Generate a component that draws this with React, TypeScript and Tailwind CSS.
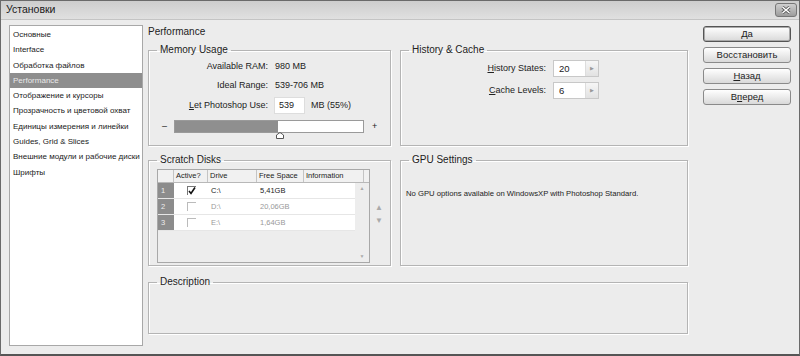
import type { ReactNode } from 'react';

const sections = [
  'Основные',
  'Interface',
  'Обработка файлов',
  'Performance',
  'Отображение и курсоры',
  'Прозрачность и цветовой охват',
  'Единицы измерения и линейки',
  'Guides, Grid & Slices',
  'Внешние модули и рабочие диски',
  'Шрифты',
];

const disks = [
  { n: 1, active: true, drive: 'C:\\', free: '5,41GB' },
  { n: 2, active: false, drive: 'D:\\', free: '20,06GB' },
  { n: 3, active: false, drive: 'E:\\', free: '1,64GB' },
];

function Group({ title, className, children }: { title: string; className: string; children?: ReactNode }) {
  return (
    <fieldset className={`min-w-0 border border-[#b4b4b4] shadow-[inset_1px_1px_0_#fff,1px_1px_0_#fff] ${className}`}>
      <legend className="ml-[8px] px-[3px] text-[10px] leading-[12px] text-[#222]">{title}</legend>
      {children}
    </fieldset>
  );
}

function DialogButton({ label, isDefault }: { label: ReactNode; isDefault?: boolean }) {
  return (
    <button
      className={`h-[16px] w-[88px] rounded-[3px] border bg-gradient-to-b from-white to-[#d9d9d9] text-[9.5px] leading-none text-[#222] ${
        isDefault ? 'border-[#555] shadow-[inset_0_0_0_1px_#aaa]' : 'border-[#8a8a8a]'
      }`}
    >
      {label}
    </button>
  );
}

function Spin({ value }: { value: string }) {
  return (
    <div className="flex h-[17px] w-[46px] border border-[#c8c8c8] bg-white">
      <span className="flex-1 pl-[5px] text-[9.5px] leading-[15px]">{value}</span>
      <span className="grid w-[13px] place-items-center border-l border-[#ddd] bg-gradient-to-b from-[#f6f6f6] to-[#e2e2e2] text-[5px] text-[#999]">
        ▶
      </span>
    </div>
  );
}

export default function App() {
  return (
    <div className="flex h-[356px] w-[800px] flex-col overflow-hidden border border-[#6a6a6a] border-b-[2px] border-b-[#555] bg-[#ececec] font-['Liberation_Sans',Arial,sans-serif] text-[#222]">
      {/* title bar */}
      <div className="flex h-[19px] shrink-0 items-center justify-between border-b border-[#c4c4c4] bg-gradient-to-b from-[#cdcdcd] to-[#e0e0e0] pl-[5px] pr-[2px]">
        <span className="text-[10.5px] text-[#1a1a1a]">Установки</span>
        <button className="grid h-[14px] w-[22px] place-items-center rounded-[3px] border border-[#777] bg-gradient-to-b from-[#d0d0d0] to-[#9c9c9c]">
          <svg width="10" height="8" viewBox="0 0 10 8">
            <path d="M1.5 1 L8.5 7 M8.5 1 L1.5 7" stroke="#555" strokeWidth="3" />
            <path d="M1.5 1 L8.5 7 M8.5 1 L1.5 7" stroke="#fff" strokeWidth="1.5" />
          </svg>
        </button>
      </div>

      <div className="flex flex-1">
        {/* section list */}
        <div className="ml-[8px] mt-[5px] h-[321px] w-[134px] border border-[#a8a8a8] bg-white pt-[1px]">
          {sections.map((s) => (
            <div
              key={s}
              className={`h-[15.3px] whitespace-nowrap pl-[3px] text-[8px] leading-[15.3px] ${
                s === 'Performance' ? 'bg-[#8e8e8e] text-[#e8e8e8]' : 'text-[#1a1a1a]'
              }`}
            >
              {s}
            </div>
          ))}
        </div>

        {/* main panel */}
        <div className="ml-[5px] flex w-[540px] flex-col pt-[5px]">
          <div className="h-[13px] text-[10px] leading-[13px]">Performance</div>

          <div className="mt-[6px] flex gap-[9px]">
            <Group title="Memory Usage" className="h-[102px] w-[243px]">
              <div className="mt-[1px] flex h-[19px] items-center text-[9px]">
                <span className="w-[119px] text-right">Available RAM:</span>
                <span className="ml-[7px]">980 MB</span>
              </div>
              <div className="flex h-[19px] items-center text-[9px]">
                <span className="w-[119px] text-right">Ideal Range:</span>
                <span className="ml-[7px]">539-706 MB</span>
              </div>
              <div className="flex h-[21px] items-center text-[9px]">
                <span className="w-[119px] text-right">
                  <u>L</u>et Photoshop Use:
                </span>
                <span className="ml-[6px] h-[17px] w-[31px] border border-[#ddd] bg-white pl-[4px] leading-[15px]">539</span>
                <span className="ml-[6px]">MB (55%)</span>
              </div>
              <div className="mt-[4px] flex items-center pl-[13px]">
                <span className="w-[12px] text-[9px]">–</span>
                <div className="relative h-[13px] w-[190px] border border-[#9a9a9a] bg-white">
                  <div className="h-full w-[55%] bg-[#8f8f8f]" />
                  <svg className="absolute left-[101px] top-[11px]" width="8" height="7" viewBox="0 0 8 7">
                    <path d="M4 0.5 L7.5 3 L7.5 6.5 L0.5 6.5 L0.5 3 Z" fill="#fff" stroke="#555" />
                  </svg>
                </div>
                <span className="ml-[8px] text-[9px]">+</span>
              </div>
            </Group>

            <Group title="History & Cache" className="h-[102px] w-[288px]">
              <div className="mt-[4px] flex items-center text-[9px]">
                <span className="w-[145px] text-right">
                  <u>H</u>istory States:
                </span>
                <div className="ml-[7px]">
                  <Spin value="20" />
                </div>
              </div>
              <div className="mt-[5px] flex items-center text-[9px]">
                <span className="w-[145px] text-right">
                  <u>C</u>ache Levels:
                </span>
                <div className="ml-[7px]">
                  <Spin value="6" />
                </div>
              </div>
            </Group>
          </div>

          <div className="mt-[8px] flex gap-[9px]">
            <Group title="Scratch Disks" className="h-[112px] w-[243px]">
              <div className="flex items-center">
                <div className="ml-[8px] mt-[3px] h-[94px] w-[213px] border border-[#a8a8a8] bg-[#ededed] text-[7.5px]">
                  <div className="flex h-[13px] border-b border-[#b8b8b8] bg-[#f1f1f1] leading-[12px]">
                    <span className="w-[16px] border-r border-[#c4c4c4]" />
                    <span className="w-[34px] border-r border-[#c4c4c4] pl-[2px]">Active?</span>
                    <span className="w-[49px] border-r border-[#c4c4c4] pl-[2px]">Drive</span>
                    <span className="w-[47px] border-r border-[#c4c4c4] pl-[2px]">Free Space</span>
                    <span className="w-[60px] border-r border-[#c4c4c4] pl-[2px]">Information</span>
                  </div>
                  <div className="flex h-[79px]">
                    <div className="flex-1">
                      {disks.map((d) => (
                        <div key={d.n} className="flex h-[16px] border-b border-[#e6e6e6] bg-white leading-[16px]">
                          <span className="w-[16px] bg-[#8c8c8c] pl-[3px] text-[#eee]">{d.n}</span>
                          <span className="flex w-[34px] items-center justify-center">
                            {d.active ? (
                              <span className="grid h-[9px] w-[9px] place-items-center border-l border-t border-[#777]">
                                <svg width="8" height="8" viewBox="0 0 8 8">
                                  <path d="M1 4 L3 6.5 L7 0.5" fill="none" stroke="#111" strokeWidth="1.6" />
                                </svg>
                              </span>
                            ) : (
                              <span className="h-[9px] w-[9px] border-l border-t border-[#bbb]" />
                            )}
                          </span>
                          <span className={`w-[49px] pl-[3px] ${d.active ? 'text-[#222]' : 'text-[#999]'}`}>{d.drive}</span>
                          <span className={`w-[47px] pl-[3px] ${d.active ? 'text-[#222]' : 'text-[#999]'}`}>{d.free}</span>
                        </div>
                      ))}
                    </div>
                    <div className="flex w-[14px] flex-col items-center justify-between py-[2px] text-[5px] text-[#aaa]">
                      <span>▲</span>
                      <span>▼</span>
                    </div>
                  </div>
                </div>
                <div className="ml-[5px] flex flex-col gap-[3px] text-[8px] leading-[10px] text-[#aaa]">
                  <span>▲</span>
                  <span>▼</span>
                </div>
              </div>
            </Group>

            <Group title="GPU Settings" className="h-[112px] w-[288px]">
              <p className="mt-[22px] pl-[5px] text-[7.7px]">No GPU options available on WindowsXP with Photoshop Standard.</p>
            </Group>
          </div>

          <Group title="Description" className="mt-[10px] h-[58px] w-[540px]" />
        </div>

        {/* buttons */}
        <div className="ml-[15px] flex flex-col gap-[5px] pt-[6px]">
          <DialogButton label="Да" isDefault />
          <DialogButton label="Восстановить" />
          <DialogButton label={<><u>Н</u>азад</>} />
          <DialogButton label={<>В<u>п</u>еред</>} />
        </div>
      </div>
    </div>
  );
}
